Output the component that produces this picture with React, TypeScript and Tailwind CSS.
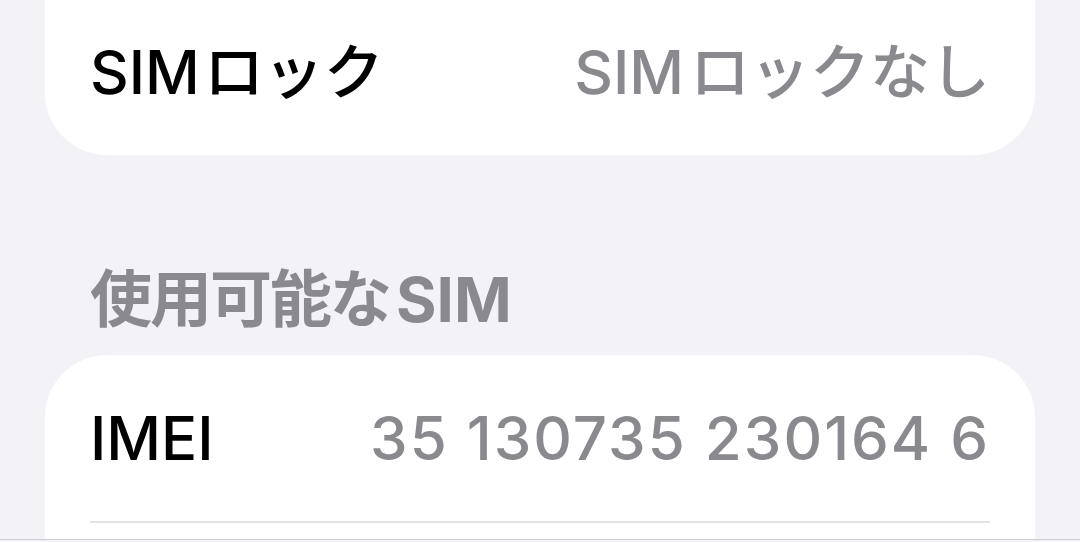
const font = { fontFamily: 'Inter, "Noto Sans CJK JP", sans-serif' };

// Latin prefix + Japanese rest, with the small gap iOS leaves between scripts
function Mixed({ latin, jp, gap }: { latin: string; jp: string; gap: string }) {
  return (
    <>
      <span>{latin}</span>
      <span className={gap}>{jp}</span>
    </>
  );
}

export default function App() {
  return (
    <div className="h-[542px] w-[1080px] overflow-hidden bg-[#f2f2f7]" style={font}>
      <div className="px-[45px]">
        {/* SIM lock card, top cut off */}
        <div className="h-[155px] rounded-b-[62px] bg-white px-[45px]">
          <div className="flex h-[144px] items-center justify-between">
            <span className="flex text-[60px] font-medium leading-none text-black">
              <Mixed latin="SIM" jp="ロック" gap="ml-[4px]" />
            </span>
            <span className="flex text-[60px] font-medium leading-none text-[#8a8a8e]">
              <Mixed latin="SIM" jp="ロックなし" gap="ml-[6px]" />
            </span>
          </div>
        </div>

        {/* section header */}
        <div className="px-[45px] pt-[114px] pb-[24px]">
          <div className="flex text-[62px] font-bold leading-none text-[#8a8a8e]">
            <span className="tracking-[-2px]">使用可能な</span>
            <span className="ml-[6px]">SIM</span>
          </div>
        </div>

        {/* IMEI card */}
        <div className="rounded-t-[62px] bg-white pl-[45px]">
          <div className="flex h-[166px] items-center justify-between pr-[45px]">
            <span className="text-[60px] font-medium leading-none text-black">IMEI</span>
            <span className="text-[60px] font-medium leading-none tracking-[2px] text-[#8a8a8e]">35 130735 230164 6</span>
          </div>
          <div className="mr-[45px] h-[2px] bg-[#e3e3e7]" />
          <div className="h-[16px]" />
        </div>
      </div>
      <div className="h-px bg-[#cfcfd3]" />
    </div>
  );
}
